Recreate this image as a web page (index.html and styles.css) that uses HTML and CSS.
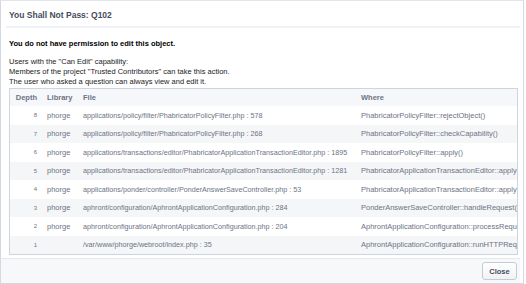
FILE: index.html
```html
<!DOCTYPE html>
<html lang="en">
<head>
    <meta charset="UTF-8">
    <title>You Shall Not Pass: Q102</title>
    <link rel="stylesheet" href="styles.css">
</head>
<body>

    <div class="dialog">
        <div class="dialog-head">
            <h1>You Shall Not Pass: Q102</h1>
        </div>

        <div class="dialog-body">
            <p class="denied">You do not have permission to edit this object.</p>

            <div class="policy">
                <p class="policy-title">Users with the "Can Edit" capability:</p>
                <p>Members of the project "Trusted Contributors" can take this action.</p>
                <p>The user who asked a question can always view and edit it.</p>
            </div>

            <!-- stack trace -->
            <div class="trace">
                <table class="trace-table">
                    <colgroup>
                        <col class="col-depth">
                        <col class="col-lib">
                        <col class="col-file">
                        <col class="col-where">
                    </colgroup>
                    <thead>
                        <tr>
                            <th class="depth">Depth</th>
                            <th>Library</th>
                            <th>File</th>
                            <th>Where</th>
                        </tr>
                    </thead>
                    <tbody>
                        <tr>
                            <td class="depth">8</td>
                            <td>phorge</td>
                            <td>applications/policy/filter/PhabricatorPolicyFilter.php : 578</td>
                            <td>PhabricatorPolicyFilter::rejectObject()</td>
                        </tr>
                        <tr>
                            <td class="depth">7</td>
                            <td>phorge</td>
                            <td>applications/policy/filter/PhabricatorPolicyFilter.php : 268</td>
                            <td>PhabricatorPolicyFilter::checkCapability()</td>
                        </tr>
                        <tr>
                            <td class="depth">6</td>
                            <td>phorge</td>
                            <td>applications/transactions/editor/PhabricatorApplicationTransactionEditor.php : 1895</td>
                            <td>PhabricatorPolicyFilter::apply()</td>
                        </tr>
                        <tr>
                            <td class="depth">5</td>
                            <td>phorge</td>
                            <td>applications/transactions/editor/PhabricatorApplicationTransactionEditor.php : 1281</td>
                            <td>PhabricatorApplicationTransactionEditor::applyCapabilityChecks()</td>
                        </tr>
                        <tr>
                            <td class="depth">4</td>
                            <td>phorge</td>
                            <td>applications/ponder/controller/PonderAnswerSaveController.php : 53</td>
                            <td>PhabricatorApplicationTransactionEditor::applyTransactions()</td>
                        </tr>
                        <tr>
                            <td class="depth">3</td>
                            <td>phorge</td>
                            <td>aphront/configuration/AphrontApplicationConfiguration.php : 284</td>
                            <td>PonderAnswerSaveController::handleRequest()</td>
                        </tr>
                        <tr>
                            <td class="depth">2</td>
                            <td>phorge</td>
                            <td>aphront/configuration/AphrontApplicationConfiguration.php : 204</td>
                            <td>AphrontApplicationConfiguration::processRequest()</td>
                        </tr>
                        <tr>
                            <td class="depth">1</td>
                            <td></td>
                            <td>/var/www/phorge/webroot/index.php : 35</td>
                            <td>AphrontApplicationConfiguration::runHTTPRequest()</td>
                        </tr>
                    </tbody>
                </table>
            </div>
        </div>

        <div class="dialog-foot">
            <button class="close-button">Close</button>
        </div>
    </div>

</body>
</html>
```

FILE: styles.css
```css
/* Page */
html, body {
    margin: 0;
    padding: 0;
    background-color: #fff;
    font-family: 'Liberation Sans', Arial, sans-serif;
    font-size: 7.5px;
    color: #000;
}

/* Dialog frame */
.dialog {
    width: 522px;
    height: 282px;
    border: 1px solid #d3d8e2;
    border-top-color: #e2e5ea;
    display: flex;
    flex-direction: column;
    background-color: #fff;
}

.dialog-head {
    margin: 0 3px 0 5px;
    padding: 9px 3px 0;
    height: 16px;
    border-bottom: 2px solid #eef1f5;
}

.dialog-head h1 {
    margin: 0;
    font-size: 8.5px;
    font-weight: bold;
    color: #464c5c;
}

/* Body */
.dialog-body {
    flex: 1;
    padding: 0 5px 0 8px;
}

.denied {
    margin: 11px 0 0;
    font-weight: bold;
    font-size: 7.5px;
}

.policy {
    margin-top: 9px;
    margin-bottom: 1px;
    line-height: 10px;
    color: #222;
}

.policy p {
    margin: 0;
}

/* Stack trace table */
.trace {
    border: 1px solid #cfd5df;
    overflow: hidden;
}

.trace-table {
    border-collapse: collapse;
    table-layout: fixed;
    width: 640px;
    white-space: nowrap;
    color: #6d7384;
}

.col-depth { width: 33px; }
.col-lib { width: 36px; }
.col-file { width: 278px; }
.col-where { width: 293px; }

.trace-table th {
    height: 17px;
    text-align: left;
    font-weight: bold;
    color: #6d7384;
    background-color: #f5f7fa;
    padding: 0 4px;
}

.trace-table td {
    height: 18.5px;
    padding: 0 4px;
    overflow: hidden;
}

.trace-table td:nth-child(3) {
    font-size: 7.2px;
}

.trace-table tbody tr:nth-child(even) td {
    background-color: #f5f6f8;
}

.trace-table .depth {
    text-align: right;
    padding-right: 6px;
}

.trace-table td.depth {
    font-size: 6px;
}

/* Footer */
.dialog-foot {
    height: 24px;
    margin: 0 3px 0 0;
    border-top: 1px solid #e4e8ee;
    background-color: #f7f8fa;
    display: flex;
    justify-content: flex-end;
    align-items: center;
    padding-right: 3px;
}

.close-button {
    width: 35px;
    height: 18px;
    padding: 0;
    font-family: 'Liberation Sans', Arial, sans-serif;
    font-size: 7.5px;
    font-weight: bold;
    color: #464c5c;
    background: linear-gradient(#fff, #f1f2f4);
    border: 1px solid #c4cad6;
    border-radius: 3px;
    cursor: pointer;
}
```
